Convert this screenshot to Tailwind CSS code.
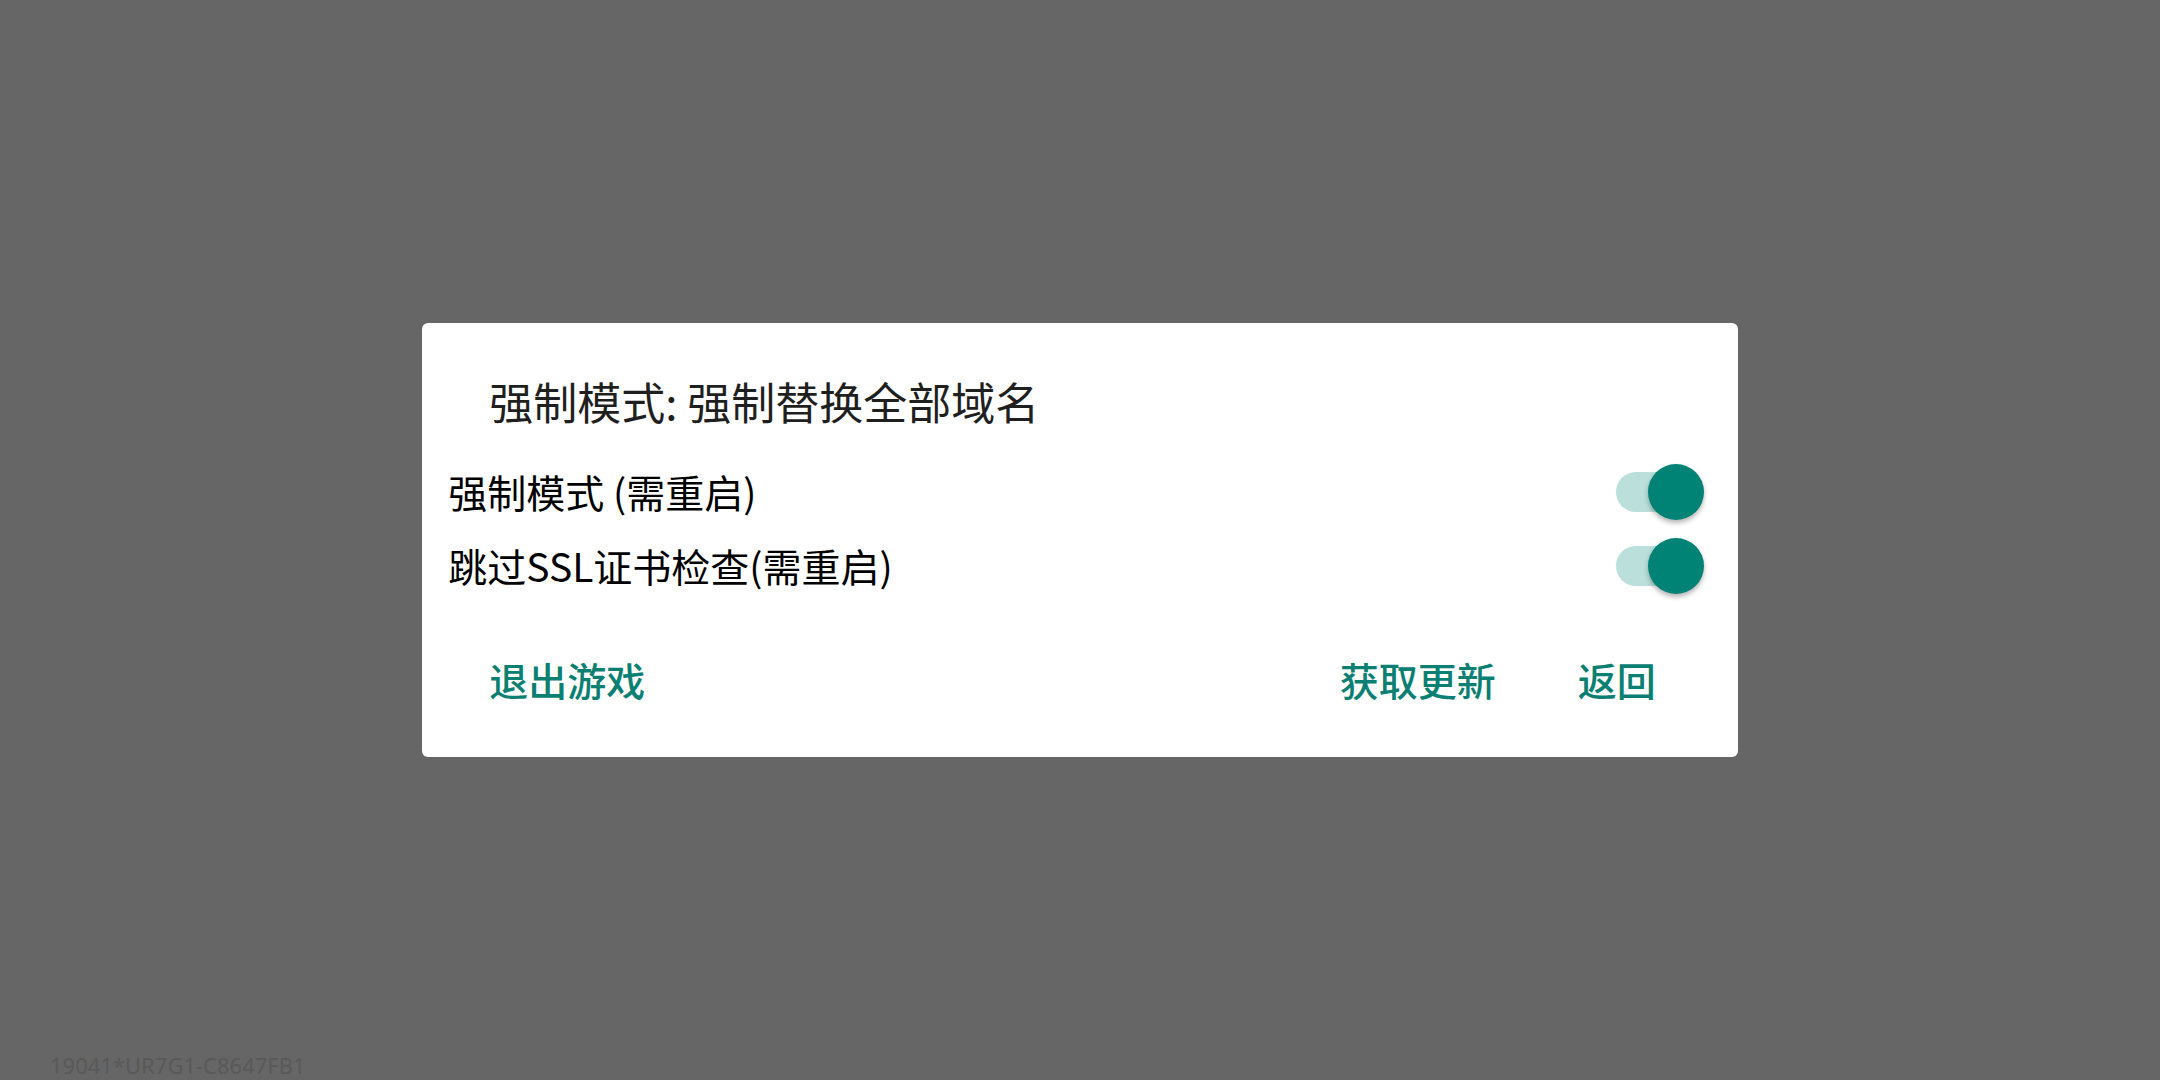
<!DOCTYPE html>
<html lang="zh-CN">
<head>
<meta charset="utf-8">
<meta name="viewport" content="width=device-width, initial-scale=1">
<title>强制模式</title>
<script src="https://cdn.jsdelivr.net/npm/@tailwindcss/browser@4"></script>
</head>
<body class="relative flex min-h-screen items-center justify-center bg-[#666666] font-['Noto_Sans_CJK_SC',sans-serif] text-black">
  <main role="dialog" aria-labelledby="dialog-title" class="w-[60.9%] rounded-md bg-white pt-[42px] pb-[38px]">
    <h1 id="dialog-title" class="px-[67px] text-[44px] leading-[72px] text-[#1f1f1f]">强制模式: 强制替换全部域名</h1>
    <div class="mt-[18px] pr-[34px] pl-[26px] text-[39px]">
      <div class="flex h-[74px] items-center justify-between">
        <label for="force-mode" class="pb-[2px]">强制模式 (需重启)</label>
        <input id="force-mode" type="checkbox" role="switch" checked class="relative h-14 w-[88px] appearance-none rounded-full before:absolute before:top-2 before:left-0 before:h-10 before:w-[72px] before:rounded-full before:bg-[#bbdfda] after:absolute after:top-0 after:left-0 after:size-14 after:rounded-full after:bg-[#008375] after:shadow-[0_3px_5px_rgb(0_0_0/0.3)] checked:after:left-8">
      </div>
      <div class="flex h-[74px] items-center justify-between">
        <label for="skip-ssl" class="pb-[2px]">跳过SSL证书检查(需重启)</label>
        <input id="skip-ssl" type="checkbox" role="switch" checked class="relative h-14 w-[88px] appearance-none rounded-full before:absolute before:top-2 before:left-0 before:h-10 before:w-[72px] before:rounded-full before:bg-[#bbdfda] after:absolute after:top-0 after:left-0 after:size-14 after:rounded-full after:bg-[#008375] after:shadow-[0_3px_5px_rgb(0_0_0/0.3)] checked:after:left-8">
      </div>
    </div>
    <div class="mt-[36px] flex items-center pr-[82px] pl-[67px] text-[39px] leading-[80px] font-medium text-[#0b8072]">
      <button type="button" class="mr-auto">退出游戏</button>
      <button type="button" class="mr-[82px]">获取更新</button>
      <button type="button">返回</button>
    </div>
  </main>
  <p class="absolute bottom-0 left-[50px] font-['Noto_Sans',sans-serif] text-[22px] leading-[30px] text-[#595959]">19041*UR7G1-C8647FB1</p>
</body>
</html>
